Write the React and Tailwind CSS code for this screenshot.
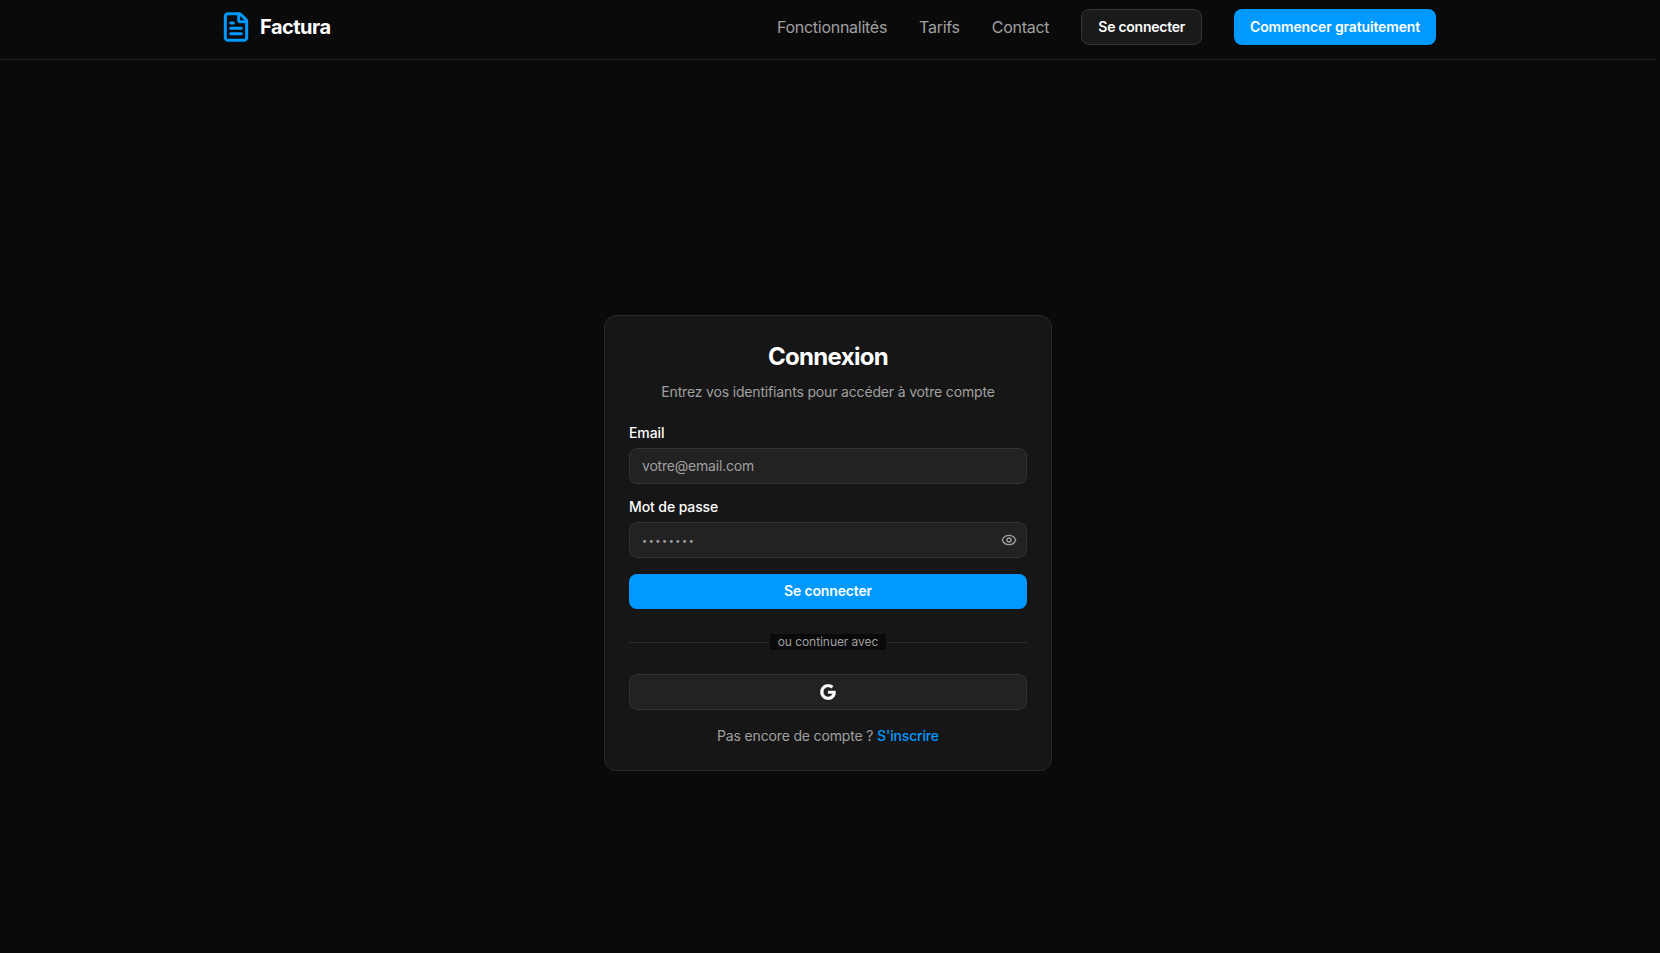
import { FileText, Eye } from "lucide-react";

function GoogleG() {
  return (
    <svg viewBox="0 0 488 512" width="16" height="16" fill="currentColor" stroke="currentColor" strokeWidth="12">
      <path d="M488 261.8C488 403.3 391.1 504 248 504 110.8 504 0 393.2 0 256S110.8 8 248 8c66.8 0 123 24.5 166.3 64.9l-67.5 64.9C258.5 52.6 94.3 116.6 94.3 256c0 86.5 69.1 156.6 153.7 156.6 98.2 0 135-70.4 140.8-106.9H248v-85.3h236.1c2.3 12.7 3.9 24.9 3.9 41.4z" />
    </svg>
  );
}

export default function App() {
  return (
    <div className="min-h-[953px] bg-[#0a0a0a] pr-[4px] text-white font-['Inter',sans-serif] overflow-hidden">
      <header className="border-b border-[#222222] h-[60px]">
        <div className="mx-auto max-w-[1280px] px-8 pt-[9px] flex items-center justify-between">
          <div className="flex items-center gap-2">
            <FileText size={32} className="text-[#0099ff]" strokeWidth={2.25} />
            <span className="text-xl font-bold tracking-[-0.5px]">Factura</span>
          </div>
          <nav className="flex items-center gap-8">
            <a className="text-base tracking-[-0.27px] text-[#a0a0a0]">Fonctionnalités</a>
            <a className="text-base tracking-[-0.27px] text-[#a0a0a0]">Tarifs</a>
            <a className="text-base tracking-[-0.27px] text-[#a0a0a0]">Contact</a>
            <button className="h-9 px-4 rounded-lg border border-[#333333] bg-[#1a1a1a] text-sm font-semibold tracking-[-0.26px]">Se connecter</button>
            <button className="h-9 px-4 rounded-lg bg-[#0099ff] text-sm font-semibold tracking-[-0.15px]">Commencer gratuitement</button>
          </nav>
        </div>
      </header>
      <main className="flex justify-center pt-[255px]">
        <div className="w-[448px] h-[456px] rounded-xl border border-[#2a2a2a] bg-[#161616] p-6 flex flex-col">
          <h1 className="text-2xl font-bold text-center leading-8 mt-[1px] tracking-[-0.7px]">Connexion</h1>
          <p className="text-sm text-center text-[#a0a0a0] mt-[9px] leading-5 tracking-[-0.166px]">Entrez vos identifiants pour accéder à votre compte</p>
          <label className="block text-sm font-medium mt-[21px] leading-5 tracking-[-0.1px]">Email</label>
          <div className="mt-[5px] h-9 rounded-lg border border-[#333333] bg-[#222222] px-3 flex items-center text-sm tracking-[-0.2px] text-[#a0a0a0]">votre@email.com</div>
          <label className="block text-sm font-medium mt-[13px] leading-5 tracking-[-0.1px]">Mot de passe</label>
          <div className="mt-[5px] h-9 rounded-lg border border-[#333333] bg-[#222222] pl-3 pr-[9px] flex items-center justify-between">
            <span className="text-[9px] tracking-[1.6px] text-[#a0a0a0] translate-y-[1px]">••••••••</span>
            <Eye size={16} className="text-[#a0a0a0]" />
          </div>
          <button className="mt-4 h-9 w-full rounded-lg bg-[#0099ff] text-sm font-semibold tracking-[-0.15px]">Se connecter</button>
          <div className="relative mt-[25px] h-4 flex items-center justify-center">
            <div className="absolute inset-x-0 top-1/2 border-t border-[#2a2a2a]" />
            <span className="relative bg-[#0a0a0a] px-2 text-xs leading-4 tracking-[-0.06px] text-[#a0a0a0]">ou continuer avec</span>
          </div>
          <button className="mt-6 h-9 w-full rounded-lg border border-[#333333] bg-[#222222] flex items-center justify-center">
            <GoogleG />
          </button>
          <p className="mt-4 text-sm text-center text-[#a0a0a0] leading-5 tracking-[-0.16px]">
            Pas encore de compte ? <a className="text-[#0099ff] font-medium">S'inscrire</a>
          </p>
        </div>
      </main>
    </div>
  );
}
